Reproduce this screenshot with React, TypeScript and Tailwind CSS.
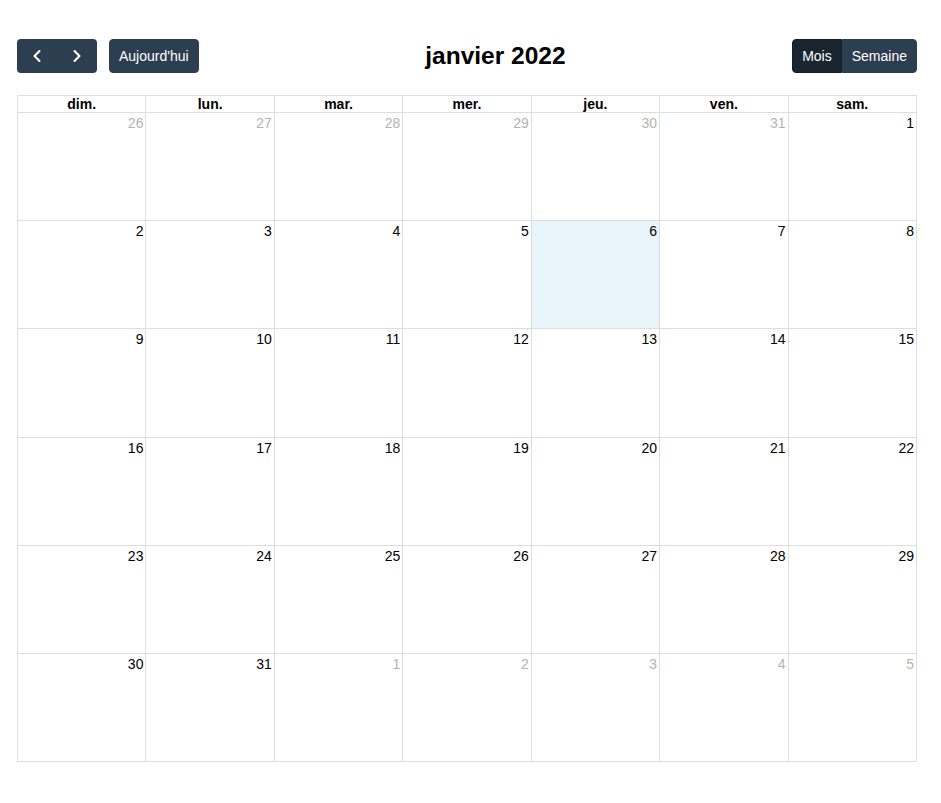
import { ChevronLeft, ChevronRight } from "lucide-react";

const dayNames = ["dim.", "lun.", "mar.", "mer.", "jeu.", "ven.", "sam."];

type Day = { n: number; other: boolean; today?: boolean };

function buildWeeks(): Day[][] {
  const days: Day[] = [];
  for (let d = 26; d <= 31; d++) days.push({ n: d, other: true });
  for (let d = 1; d <= 31; d++) days.push({ n: d, other: false, today: d === 6 });
  for (let d = 1; d <= 5; d++) days.push({ n: d, other: true });
  const weeks: Day[][] = [];
  for (let i = 0; i < days.length; i += 7) weeks.push(days.slice(i, i + 7));
  return weeks;
}

export default function App() {
  const weeks = buildWeeks();

  return (
    <div
      className="min-h-screen bg-white text-[14px] text-black"
      style={{ fontFamily: '"Liberation Sans", Arial, sans-serif' }}
    >
      <div className="pl-[17px] pt-[39px] w-[917px]">
        {/* Toolbar */}
        <div className="flex items-center justify-between h-[34px]">
          <div className="flex items-center gap-[12px]">
            <div className="flex">
              <button className="flex h-[34px] w-[40px] items-center justify-center rounded-l-[4px] bg-[#2c3e50] text-white">
                <ChevronLeft size={20} strokeWidth={2.5} />
              </button>
              <button className="flex h-[34px] w-[40px] items-center justify-center rounded-r-[4px] bg-[#2c3e50] text-white">
                <ChevronRight size={20} strokeWidth={2.5} />
              </button>
            </div>
            <button className="h-[34px] rounded-[4px] border border-[#2c3e50] bg-[#2c3e50] px-[9px] leading-[21px] text-white">
              Aujourd'hui
            </button>
          </div>
          <h2 className="text-[24.5px] font-bold leading-[30px]">janvier 2022</h2>
          <div className="flex">
            <button className="h-[34px] rounded-l-[4px] border border-[#151e27] bg-[#1a252f] px-[9px] leading-[21px] text-white">
              Mois
            </button>
            <button className="h-[34px] rounded-r-[4px] border border-[#2c3e50] bg-[#2c3e50] px-[9px] leading-[21px] text-white">
              Semaine
            </button>
          </div>
        </div>

        {/* Grid */}
        <div className="mt-[22px] flex h-[667px] flex-col border-l border-t border-[#ddd]">
          <div className="grid grid-cols-7">
            {dayNames.map((d) => (
              <div
                key={d}
                className="h-[17px] border-b border-r border-[#ddd] text-center font-bold leading-[16px]"
              >
                {d}
              </div>
            ))}
          </div>
          {weeks.map((week, wi) => (
            <div key={wi} className="grid flex-1 grid-cols-7">
              {week.map((day, di) => (
                <div
                  key={di}
                  className={`border-b border-r border-[#ddd] pt-[2px] pr-[2px] text-right leading-[16px] ${
                    day.today ? "bg-[#e8f6fb]" : ""
                  }`}
                >
                  <span className={day.other ? "text-[#b3b3b3]" : "text-black"}>{day.n}</span>
                </div>
              ))}
            </div>
          ))}
        </div>
      </div>
    </div>
  );
}
